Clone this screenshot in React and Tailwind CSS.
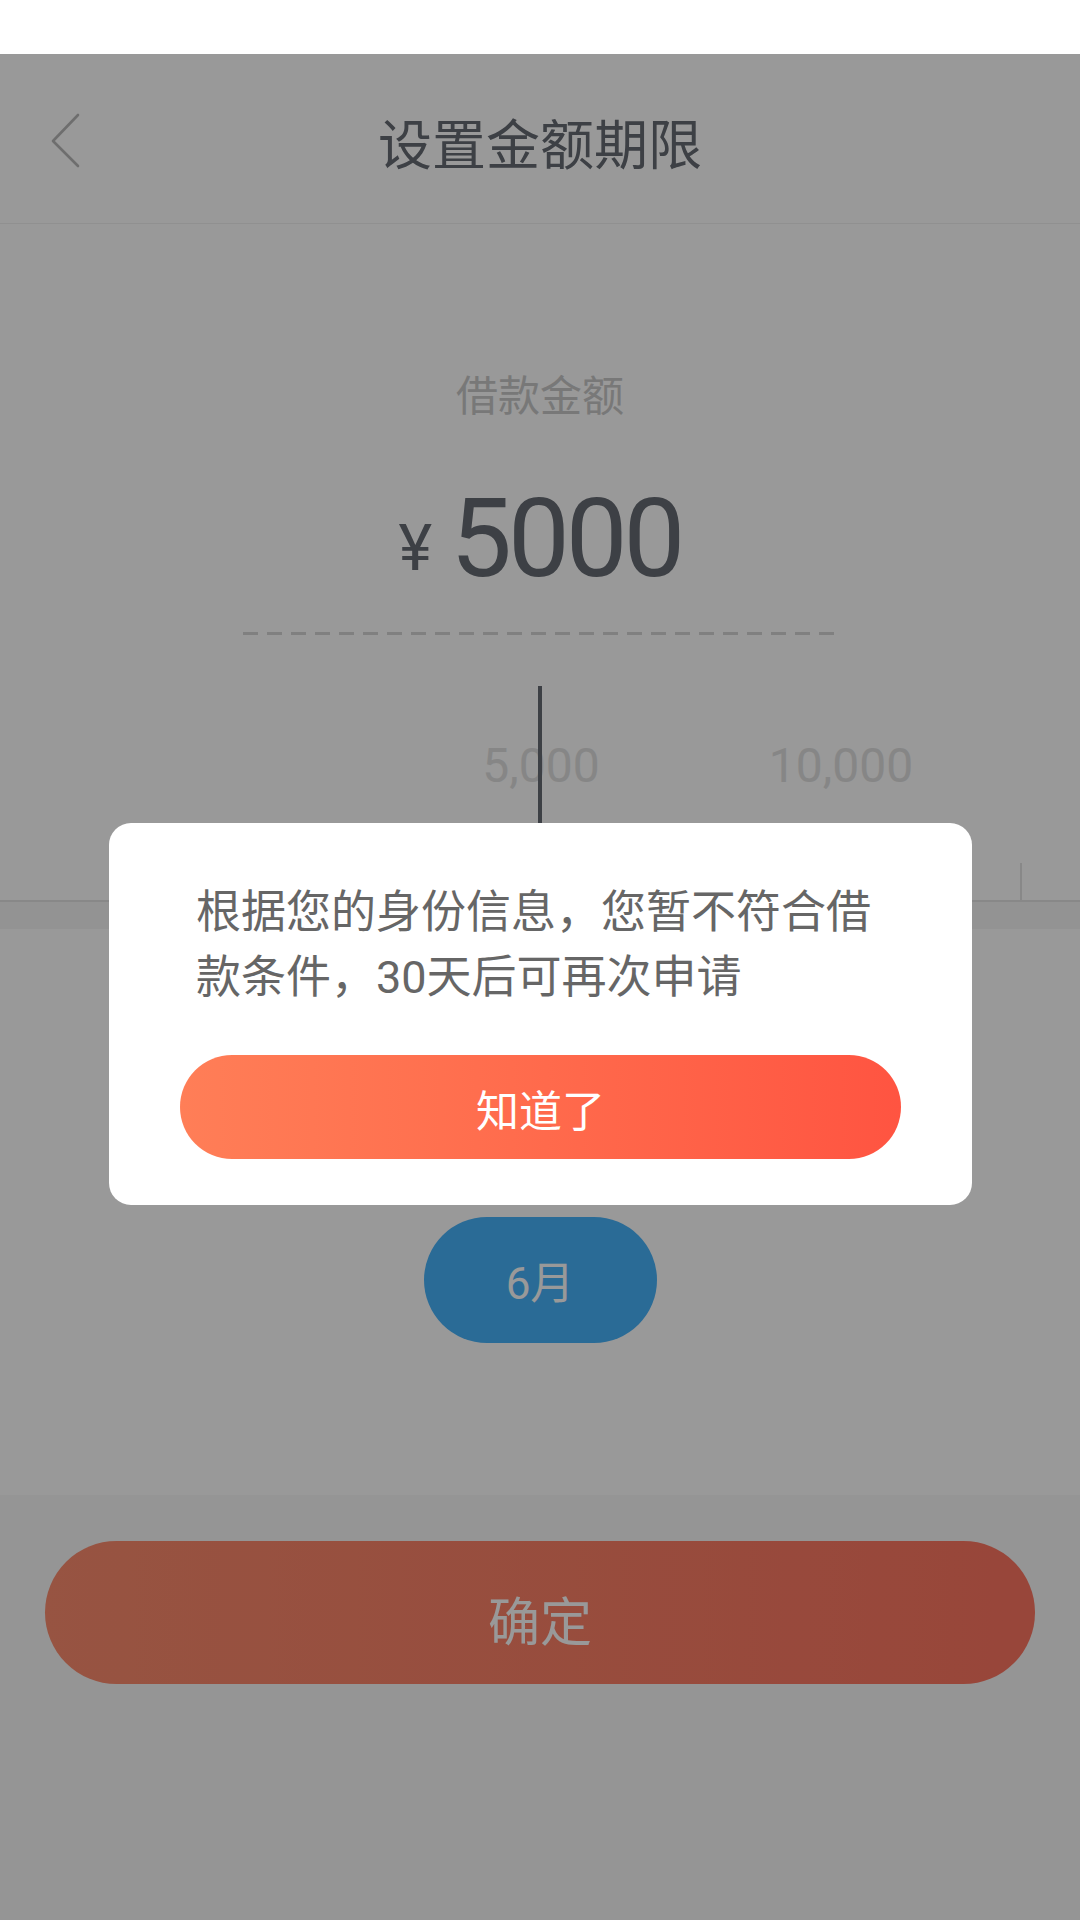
import React from 'react';

const TICKS = Array.from({ length: 20 }, (_, i) => (i + 1) * 1000);
const LABELS = [5000, 10000];

// px position of a value on the ruler, 5,000 sits under the pointer
const xOf = (v) => 541 + (v - 5000) * 0.06;

function Ruler() {
    return (
        <div className="relative mt-[51px] h-[216px] overflow-hidden border-b-2 border-[#e3e3e3]">
            {LABELS.map((v) => (
                <span
                    key={v}
                    className="absolute top-[56px] -translate-x-1/2 text-[48px] leading-none text-[#e0e0e0]"
                    style={{ left: xOf(v) }}
                >
                    {v.toLocaleString('en-US')}
                </span>
            ))}
            {TICKS.map((v) => (
                <div
                    key={v}
                    className="absolute bottom-0 h-[37px] w-[2px] bg-[#e3e3e3]"
                    style={{ left: xOf(v) - 1 }}
                />
            ))}
            {/* pointer */}
            <div className="absolute left-[538px] top-0 h-full w-[4px] bg-[#666b73]" />
        </div>
    );
}

function Dialog() {
    return (
        <div className="absolute left-[109px] top-[769px] w-[863px] rounded-[22px] bg-white pt-[57px] pb-[46px]">
            <p className="pl-[87px] pr-[80px] text-[45px] leading-[65px] text-[#666666]">
                根据您的身份信息，您暂不符合借款条件，30天后可再次申请
            </p>
            <button className="mx-[71px] mt-[45px] flex h-[104px] w-[721px] items-center justify-center rounded-full bg-gradient-to-r from-[#ff7e57] to-[#ff5441] pt-[10px] text-[43px] leading-none text-white">
                知道了
            </button>
        </div>
    );
}

export default function App() {
    return (
        <div className="flex h-[1920px] w-[1080px] flex-col overflow-hidden bg-white font-['Roboto','Noto_Sans_CJK_SC',sans-serif]">
            {/* status bar */}
            <div className="h-[54px] shrink-0 bg-white" />

            <div className="relative flex flex-1 flex-col">
                {/* Header */}
                <div className="grid h-[170px] grid-cols-[1fr_auto_1fr] items-start border-b border-[#f0f0f0]">
                    <div className="pl-[47px] pt-[57px]">
                        <svg width="36" height="60" viewBox="0 0 36 60" fill="none">
                            <path d="M31 4 L6 30 L31 55" stroke="#b8b8b8" strokeWidth="2.6" strokeLinecap="round" strokeLinejoin="round" />
                        </svg>
                    </div>
                    <h1 className="pt-[66px] text-[54px] leading-none text-[#666b73]">设置金额期限</h1>
                    <div />
                </div>

                {/* Amount */}
                <div className="flex flex-col">
                    <p className="mt-[152px] text-center text-[42px] leading-none text-[#c8c8c8]">借款金额</p>
                    <div className="mt-[66px] flex items-end justify-center">
                        <span className="mb-[13px] mr-[18px] text-[64px] leading-none text-[#666b73]">¥</span>
                        <span className="text-[110px] leading-none tracking-[-4px] text-[#666b73]">5000</span>
                    </div>
                    <div className="mx-auto mt-[38px] h-[3px] w-[594px] bg-[repeating-linear-gradient(90deg,#d5d5d5_0_15px,transparent_15px_24px)]" />
                    <Ruler />
                </div>

                <div className="h-[27px] bg-[#f5f5f5]" />

                {/* Term */}
                <div className="flex h-[566px] flex-col items-center pt-[288px]">
                    <div className="flex h-[126px] w-[233px] items-center justify-center rounded-full bg-[#46b2fa] pt-[8px] text-[44px] leading-none text-white">
                        6月
                    </div>
                </div>

                {/* Footer */}
                <div className="flex-1 bg-[#f8f8f8] px-[45px] pt-[46px]">
                    <button className="flex h-[143px] w-full items-center justify-center rounded-full bg-gradient-to-r from-[#fc8c6e] to-[#fd7561] pt-[22px] text-[52px] leading-none text-white">
                        确定
                    </button>
                </div>

                {/* dim + dialog */}
                <div className="absolute inset-0 bg-black/40" />
                <Dialog />
            </div>
        </div>
    );
}
